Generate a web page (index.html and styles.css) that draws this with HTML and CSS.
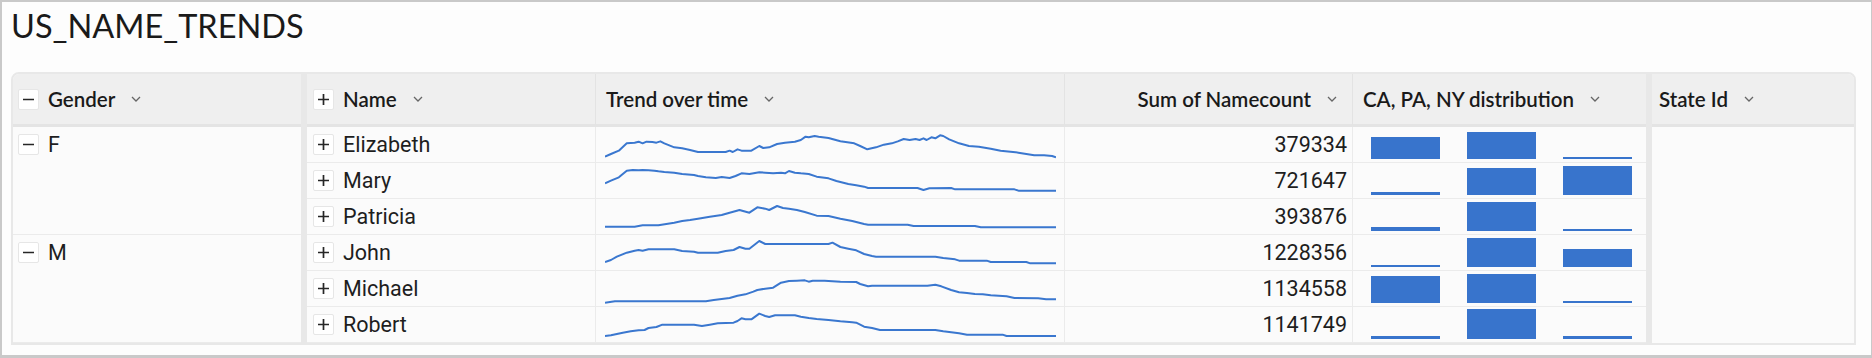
FILE: index.html
```html
<!DOCTYPE html>
<html>
<head>
<meta charset="utf-8">
<link rel="stylesheet" href="styles.css">
</head>
<body>
<svg class="defs" width="0" height="0" aria-hidden="true">
  <symbol id="i-minus" viewBox="0 0 11 11"><path d="M0 5.5H11" stroke="#262626" stroke-width="1.7"/></symbol>
  <symbol id="i-plus" viewBox="0 0 11 11"><path d="M0 5.5H11M5.5 0V11" stroke="#262626" stroke-width="1.7"/></symbol>
  <symbol id="i-chev" viewBox="0 0 10 6"><polyline points="1,1 5,5 9,1" fill="none" stroke="#666" stroke-width="1.3"/></symbol>
</svg>
<div class="frame">
  <h1 class="title">US_NAME_TRENDS</h1>
  <div class="table">
    <div class="hd c-gender"><span class="tog"><svg><use href="#i-minus"/></svg></span><span class="hl">Gender</span><svg class="chev"><use href="#i-chev"/></svg></div>
    <div class="divider d1"></div>
    <div class="hd c-name"><span class="tog"><svg><use href="#i-plus"/></svg></span><span class="hl">Name</span><svg class="chev"><use href="#i-chev"/></svg></div>
    <div class="hd c-trend"><span class="hl">Trend over time</span><svg class="chev"><use href="#i-chev"/></svg></div>
    <div class="hd c-sum"><span class="hl">Sum of Namecount</span><svg class="chev"><use href="#i-chev"/></svg></div>
    <div class="hd c-ca"><span class="hl">CA, PA, NY distribution</span><svg class="chev"><use href="#i-chev"/></svg></div>
    <div class="divider d2"></div>
    <div class="hd c-state"><span class="hl">State Id</span><svg class="chev"><use href="#i-chev"/></svg></div>

    <div class="grp c-gender"><div class="grp-head"><span class="tog"><svg><use href="#i-minus"/></svg></span><span>F</span></div></div>
    <div class="cell c-name"><span class="tog"><svg><use href="#i-plus"/></svg></span><span>Elizabeth</span></div>
    <div class="cell c-trend"><svg class="spark" viewBox="65 21 1140 105" preserveAspectRatio="none"><polyline points="65,110 80,102 100,92 120,70 140,68 150,65 160,70 170,65 185,66 195,68 205,64 215,70 240,82 260,85 280,90 300,96 370,96 380,92 388,96 400,88 410,92 435,92 455,78 465,84 480,82 500,72 520,68 545,65 560,60 572,50 580,52 595,48 605,50 630,54 660,64 695,70 710,78 728,88 750,82 770,74 790,70 805,64 820,57 835,60 850,57 860,60 870,55 878,60 890,52 900,55 912,46 920,48 935,58 960,70 985,78 1010,80 1040,86 1065,92 1090,95 1110,98 1130,102 1150,106 1175,106 1195,108 1205,112"/></svg></div>
    <div class="cell c-sum">379334</div>
    <div class="cell c-ca"><div class="bars"><i style="height:22px"></i><i style="height:27px"></i><i style="height:2px"></i></div></div>
    <div class="state-body c-state"></div>

    <div class="cell c-name"><span class="tog"><svg><use href="#i-plus"/></svg></span><span>Mary</span></div>
    <div class="cell c-trend"><svg class="spark" viewBox="65 129 1140 105" preserveAspectRatio="none"><polyline points="65,190 80,182 100,172 120,152 135,150 150,151 160,150 175,151 190,152 200,154 215,156 240,158 260,162 290,165 300,168 320,172 345,174 360,171 380,174 395,168 410,160 430,162 455,157 470,158 490,160 510,158 520,160 530,153 545,158 560,160 580,162 600,170 630,175 650,183 680,192 700,196 720,200 730,204 855,204 870,210 885,205 940,204 950,208 1100,208 1110,212 1205,212"/></svg></div>
    <div class="cell c-sum">721647</div>
    <div class="cell c-ca"><div class="bars"><i style="height:3px"></i><i style="height:27px"></i><i style="height:29px"></i></div></div>

    <div class="cell c-name"><span class="tog"><svg><use href="#i-plus"/></svg></span><span>Patricia</span></div>
    <div class="cell c-trend"><svg class="spark" viewBox="65 237 1140 105" preserveAspectRatio="none"><polyline points="65,320 140,320 160,316 200,316 220,312 240,308 260,303 280,300 300,296 330,290 360,285 380,278 405,270 430,278 450,262 470,266 480,270 500,258 515,264 530,266 550,270 570,276 600,287 630,288 660,296 690,303 720,312 730,314 830,314 845,318 1000,318 1015,322 1205,322"/></svg></div>
    <div class="cell c-sum">393876</div>
    <div class="cell c-ca"><div class="bars"><i style="height:4px"></i><i style="height:29px"></i><i style="height:2px"></i></div></div>

    <div class="grp c-gender"><div class="grp-head"><span class="tog"><svg><use href="#i-minus"/></svg></span><span>M</span></div></div>
    <div class="cell c-name"><span class="tog"><svg><use href="#i-plus"/></svg></span><span>John</span></div>
    <div class="cell c-trend"><svg class="spark" viewBox="65 345 1140 105" preserveAspectRatio="none"><polyline points="65,426 80,420 95,410 120,398 140,392 150,390 160,392 175,388 240,388 260,393 290,395 300,398 350,398 370,393 390,390 405,381 420,386 430,386 455,363 470,372 630,372 640,368 660,381 680,386 700,391 720,402 740,408 750,410 900,410 920,414 950,418 960,422 1030,422 1040,426 1130,426 1140,430 1205,430"/></svg></div>
    <div class="cell c-sum">1228356</div>
    <div class="cell c-ca"><div class="bars"><i style="height:2px"></i><i style="height:29px"></i><i style="height:18px"></i></div></div>

    <div class="cell c-name"><span class="tog"><svg><use href="#i-plus"/></svg></span><span>Michael</span></div>
    <div class="cell c-trend"><svg class="spark" viewBox="65 453 1140 105" preserveAspectRatio="none"><polyline points="65,548 90,544 320,544 340,540 380,534 400,527 420,523 440,515 450,510 470,506 490,503 510,488 530,483 550,482 570,481 580,485 590,482 620,482 660,485 700,486 710,492 730,499 740,497 880,497 900,494 915,499 940,510 960,517 980,519 1000,522 1020,523 1040,526 1080,529 1100,534 1160,535 1180,538 1205,538"/></svg></div>
    <div class="cell c-sum">1134558</div>
    <div class="cell c-ca"><div class="bars"><i style="height:27px"></i><i style="height:29px"></i><i style="height:2px"></i></div></div>

    <div class="cell c-name"><span class="tog"><svg><use href="#i-plus"/></svg></span><span>Robert</span></div>
    <div class="cell c-trend"><svg class="spark" viewBox="65 561 1140 105" preserveAspectRatio="none"><polyline points="65,648 80,646 95,642 110,638 130,634 150,631 165,630 175,624 195,621 210,614 290,614 310,618 330,614 350,610 390,608 400,603 410,595 420,598 435,598 455,581 470,588 480,591 495,586 545,586 560,590 580,594 600,597 630,600 660,604 690,607 700,608 720,620 740,624 760,630 900,630 920,634 940,637 960,640 980,644 1070,644 1080,648 1205,648"/></svg></div>
    <div class="cell c-sum">1141749</div>
    <div class="cell c-ca"><div class="bars"><i style="height:3px"></i><i style="height:30px"></i><i style="height:3px"></i></div></div>
  </div>
</div>
</body>
</html>
```

FILE: styles.css
```css
* { box-sizing: border-box; }
html, body { margin: 0; padding: 0; }
body {
  width: 1872px;
  height: 358px;
  background: #fdfdfd;
  font-family: Roboto, "Liberation Sans", sans-serif;
  color: #1e1e1e;
  overflow: hidden;
}
.defs { position: absolute; width: 0; height: 0; }

.frame {
  width: 1872px;
  height: 358px;
  border: 2px solid #c9c9c9;
  border-right-width: 1px;
  border-bottom-width: 3px;
  background: #fdfdfd;
  padding: 7px 0 0 9px;
}

.title {
  margin: 0 0 30px 0;
  font-family: Lato, "Open Sans", sans-serif;
  font-weight: 400;
  font-size: 32.5px;
  line-height: 33px;
  color: #1a1a1a;
}

.table {
  width: 1845px;
  border: 2px solid #e8e8e8;
  border-radius: 8px 8px 0 0;
  overflow: hidden;
  display: grid;
  grid-template-columns: 288px 6px 289px 469px 288px 293px 6px 202px;
  grid-template-rows: 53px repeat(6, 36px);
  background: #fbfbfb;
}

.c-gender { grid-column: 1; }
.d1 { grid-column: 2; grid-row: 1 / -1; }
.c-name { grid-column: 3; }
.c-trend { grid-column: 4; }
.c-sum { grid-column: 5; }
.c-ca { grid-column: 6; }
.d2 { grid-column: 7; grid-row: 1 / -1; }
.c-state { grid-column: 8; }

.divider { background: #e8e8e8; }

.hd {
  background: #efefef;
  border-bottom: 3px solid #e4e4e4;
  display: flex;
  align-items: center;
  font-family: Lato, "Open Sans", sans-serif;
  font-weight: 600;
  font-size: 20.5px;
  color: #1a1a1a;
  white-space: nowrap;
}
.hd.c-name, .hd.c-trend, .hd.c-sum { border-right: 1px solid #e3e3e3; }
.hd.c-gender { padding-left: 5px; }
.hd.c-name { padding-left: 6px; }
.hd.c-trend { padding-left: 10px; }
.hd.c-sum { justify-content: flex-end; padding-right: 15px; }
.hd.c-ca { padding-left: 10px; }
.hd.c-state { padding-left: 7px; }

.chev { width: 10px; height: 6px; margin-left: 16px; flex: none; }

.tog {
  width: 21px;
  height: 21px;
  flex: none;
  background: #ffffff;
  border: 1px solid #e6e6e6;
  border-radius: 2px;
  display: flex;
  align-items: center;
  justify-content: center;
  margin-right: 9px;
}
.tog svg { width: 11px; height: 11px; display: block; }

.grp {
  grid-row: span 3;
  border-bottom: 1px solid #ebebeb;
  padding-left: 5px;
  font-size: 21.5px;
}
.grp-head {
  height: 35px;
  display: flex;
  align-items: center;
}

.cell {
  border-bottom: 1px solid #ebebeb;
  display: flex;
  align-items: center;
  font-size: 21.5px;
  white-space: nowrap;
}
.cell.c-name, .cell.c-trend, .cell.c-sum { border-right: 1px solid #ebebeb; }
.cell.c-name { padding-left: 6px; }
.cell.c-trend { padding-left: 9px; }
.cell.c-sum { justify-content: flex-end; padding-right: 5px; }
.cell.c-ca { align-items: stretch; }

.spark { width: 451px; height: 35px; display: block; }
.spark polyline {
  fill: none;
  stroke: #3a77cf;
  stroke-width: 2;
  stroke-linejoin: round;
  vector-effect: non-scaling-stroke;
}

.bars {
  display: flex;
  align-items: flex-end;
  gap: 27px;
  padding: 0 0 3px 18px;
  height: 35px;
}
.bars i {
  display: block;
  width: 69px;
  background: #3874cc;
}

.state-body {
  grid-row: span 6;
  background: #fbfbfb;
}
```
